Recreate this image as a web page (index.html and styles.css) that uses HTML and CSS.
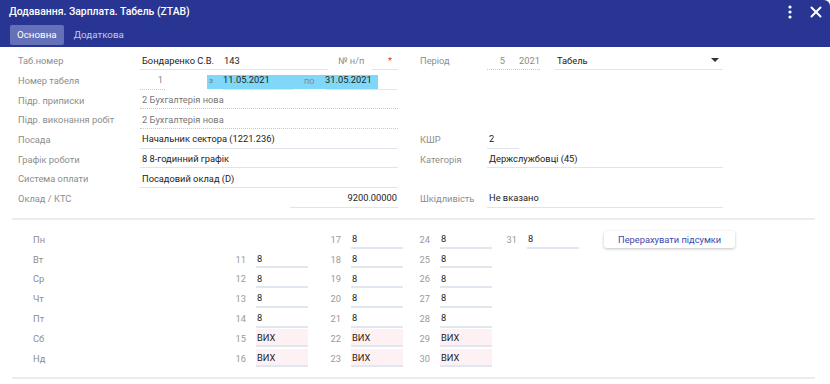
FILE: index.html
```html
<!DOCTYPE html>
<html lang="uk">
<head>
    <meta charset="UTF-8">
    <meta name="viewport" content="width=device-width, initial-scale=1.0">
    <title>Додавання. Зарплата. Табель</title>
    <link rel="stylesheet" href="styles.css">
</head>
<body>
    <div class="dialog">
        <header class="dlg-head">
            <div class="title-row">
                <span class="title">Додавання. Зарплата. Табель (ZTAB)</span>
                <span class="actions">
                    <svg width="8" height="14" viewBox="0 0 8 14"><circle cx="4" cy="2" r="1.6" fill="#fff"/><circle cx="4" cy="7" r="1.6" fill="#fff"/><circle cx="4" cy="12" r="1.6" fill="#fff"/></svg>
                    <svg width="12" height="12" viewBox="0 0 12 12"><path d="M1.5 1.5 L10.5 10.5 M10.5 1.5 L1.5 10.5" stroke="#fff" stroke-width="2" stroke-linecap="round"/></svg>
                </span>
            </div>
            <nav class="tabs">
                <span class="tab active">Основна</span>
                <span class="tab">Додаткова</span>
            </nav>
        </header>

        <div class="form">
            <div class="lbl">Таб.номер</div>
            <div class="cell">
                <span class="fld w-name"><span class="fio">Бондаренко С.В.</span>143</span>
                <span class="lbl-in">№ н/п</span>
                <span class="fld w-np"><span class="req">*</span></span>
            </div>
            <div class="lbl right">Період</div>
            <div class="cell">
                <span class="fld ro w-per"><span class="month">5</span><span class="year">2021</span></span>
                <span class="fld w-sel">Табель<span class="caret"></span></span>
            </div>

            <div class="lbl">Номер табеля</div>
            <div class="cell">
                <span class="fld ro w-num">1</span>
                <span class="range">
                    <span class="from">з</span>
                    <span class="fld w-d1">11.05.2021</span>
                    <span class="to">по</span>
                    <span class="fld w-d2">31.05.2021</span>
                </span>
            </div>
            <div class="lbl right"></div>
            <div class="cell"></div>

            <div class="lbl">Підр. приписки</div>
            <div class="cell"><span class="fld ro full muted">2 Бухгалтерія нова</span></div>
            <div class="lbl right"></div>
            <div class="cell"></div>

            <div class="lbl">Підр. виконання робіт</div>
            <div class="cell"><span class="fld ro full muted">2 Бухгалтерія нова</span></div>
            <div class="lbl right"></div>
            <div class="cell"></div>

            <div class="lbl">Посада</div>
            <div class="cell"><span class="fld full">Начальник сектора (1221.236)</span></div>
            <div class="lbl right">КШР</div>
            <div class="cell"><span class="fld w-ksr">2</span></div>

            <div class="lbl">Графік роботи</div>
            <div class="cell"><span class="fld full">8 8-годинний графік</span></div>
            <div class="lbl right">Категорія</div>
            <div class="cell"><span class="fld full">Держслужбовці (45)</span></div>

            <div class="lbl">Система оплати</div>
            <div class="cell"><span class="fld full">Посадовий оклад (D)</span></div>
            <div class="lbl right"></div>
            <div class="cell"></div>

            <div class="lbl">Оклад / КТС</div>
            <div class="cell"><span class="fld w-sum">9200.00000</span></div>
            <div class="lbl right">Шкідливість</div>
            <div class="cell"><span class="fld full">Не вказано</span></div>
        </div>

        <hr class="sep">

        <div class="calendar">
            <div class="wd">Пн</div>
            <div class="dn"></div><div></div>
            <div class="dn">17</div><div class="day">8</div>
            <div class="dn">24</div><div class="day">8</div>
            <div class="dn">31</div><div class="day">8</div>
            <button class="recalc">Перерахувати підсумки</button>

            <div class="wd">Вт</div>
            <div class="dn">11</div><div class="day">8</div>
            <div class="dn">18</div><div class="day">8</div>
            <div class="dn">25</div><div class="day">8</div>
            <div class="dn"></div><div></div><div></div>

            <div class="wd">Ср</div>
            <div class="dn">12</div><div class="day">8</div>
            <div class="dn">19</div><div class="day">8</div>
            <div class="dn">26</div><div class="day">8</div>
            <div class="dn"></div><div></div><div></div>

            <div class="wd">Чт</div>
            <div class="dn">13</div><div class="day">8</div>
            <div class="dn">20</div><div class="day">8</div>
            <div class="dn">27</div><div class="day">8</div>
            <div class="dn"></div><div></div><div></div>

            <div class="wd">Пт</div>
            <div class="dn">14</div><div class="day">8</div>
            <div class="dn">21</div><div class="day">8</div>
            <div class="dn">28</div><div class="day">8</div>
            <div class="dn"></div><div></div><div></div>

            <div class="wd">Сб</div>
            <div class="dn">15</div><div class="day off">ВИХ</div>
            <div class="dn">22</div><div class="day off">ВИХ</div>
            <div class="dn">29</div><div class="day off">ВИХ</div>
            <div class="dn"></div><div></div><div></div>

            <div class="wd">Нд</div>
            <div class="dn">16</div><div class="day off">ВИХ</div>
            <div class="dn">23</div><div class="day off">ВИХ</div>
            <div class="dn">30</div><div class="day off">ВИХ</div>
            <div class="dn"></div><div></div><div></div>
        </div>

        <hr class="sep">
    </div>
</body>
</html>
```

FILE: styles.css
```css
body {
    margin: 0;
    font-family: Roboto, "Liberation Sans", sans-serif;
    font-size: 9.3px;
    color: #222;
    background-color: #fff;
}

.dialog {
    width: 830px;
    height: 384px;
    overflow: hidden;
}

/* header */
.dlg-head {
    background-color: #283593;
    height: 47px;
    color: #fff;
    border-top-right-radius: 6px;
}

.title-row {
    display: flex;
    justify-content: space-between;
    align-items: center;
    height: 23px;
    padding: 0 8px 0 9px;
}

.title {
    font-size: 10.4px;
    font-weight: 500;
}

.actions {
    display: flex;
    align-items: center;
    gap: 16px;
}

.actions svg {
    display: block;
}

.tabs {
    display: flex;
    gap: 3px;
    padding: 2px 0 0 10px;
}

.tab {
    height: 20px;
    line-height: 20px;
    padding: 0 7px;
    border-radius: 2px;
    font-size: 9.8px;
    color: #c5cae9;
}

.tab.active {
    background-color: #6471b9;
    color: #fff;
}

/* top form */
.form {
    display: grid;
    grid-template-columns: 122px 258px 89px 236px;
    grid-auto-rows: 19.7px;
    padding: 4px 0 0 18px;
}

.lbl {
    display: flex;
    align-items: center;
    color: #8d8d8d;
}

.lbl.right {
    padding-left: 22px;
}

.cell {
    display: flex;
    align-items: stretch;
}

.fld {
    display: flex;
    align-items: center;
    box-sizing: border-box;
    height: 19px;
    padding-left: 2px;
    border-bottom: 1px solid #dfe5ee;
    white-space: nowrap;
}

.fld.ro {
    border-bottom: 1px dotted #c8c8c8;
}

.fld.full {
    flex: 1;
}

.muted {
    color: #777;
}

.w-name { width: 188px; }
.fio { width: 82px; }

.lbl-in {
    display: flex;
    align-items: center;
    width: 34px;
    margin-left: 10px;
    color: #8d8d8d;
}

.w-np {
    width: 26px;
    justify-content: flex-end;
    padding-right: 6px;
}

.req {
    color: #e53935;
}

.w-per { width: 53px; padding-left: 0; }
.month { width: 21px; text-align: right; color: #888; }
.year { margin-left: 14px; color: #888; }

.w-sel {
    width: 168px;
    margin-left: 15px;
    justify-content: space-between;
    padding-right: 4px;
}

.caret {
    width: 0;
    height: 0;
    border-left: 4px solid transparent;
    border-right: 4px solid transparent;
    border-top: 4px solid #333;
}

.w-num {
    width: 25px;
    justify-content: flex-end;
    padding-right: 2px;
    color: #888;
}

.range {
    display: flex;
    margin-left: 42px;
    background: linear-gradient(#80d8f8, #80d8f8) no-repeat 0 4px / 171px 14px;
}

.from {
    display: flex;
    align-items: center;
    width: 14px;
    padding-left: 2px;
    font-size: 8px;
    color: #777;
}

.to {
    display: flex;
    align-items: center;
    width: 21px;
    margin-left: 11px;
    color: #888;
}

.w-d1 { width: 70px; padding-left: 0; }
.w-d2 { width: 72px; padding-left: 0; }

.w-ksr { width: 32px; }

.w-sum {
    width: 108px;
    margin-left: 150px;
    justify-content: flex-end;
    padding-right: 1px;
}

.sep {
    height: 2px;
    border: 0;
    background-color: #ececec;
    margin: 9px 15px 10px 12px;
}

/* calendar */
.calendar {
    display: grid;
    grid-template-columns: 188px 35px 52px 43px 52px 37px 52px 35px 52px auto;
    grid-auto-rows: 19.8px;
    padding-left: 33px;
}

.wd {
    display: flex;
    align-items: center;
    color: #8d8d8d;
}

.dn {
    display: flex;
    align-items: center;
    justify-content: flex-end;
    padding-right: 10px;
    color: #9a9a9a;
}

.day {
    display: flex;
    align-items: center;
    box-sizing: border-box;
    height: 18px;
    margin-top: 1px;
    padding-left: 1px;
    border-bottom: 2px solid #e1e7ef;
}

.day.off {
    background-color: #fdf1f3;
}

.recalc {
    justify-self: start;
    align-self: center;
    margin-left: 25px;
    height: 17px;
    padding: 0 14px;
    font-family: Roboto, "Liberation Sans", sans-serif;
    font-size: 9.3px;
    color: #3949ab;
    background-color: #fff;
    border: 0;
    border-radius: 3px;
    box-shadow: 0 1px 3px rgba(0, 0, 0, 0.25);
    cursor: pointer;
}
```
